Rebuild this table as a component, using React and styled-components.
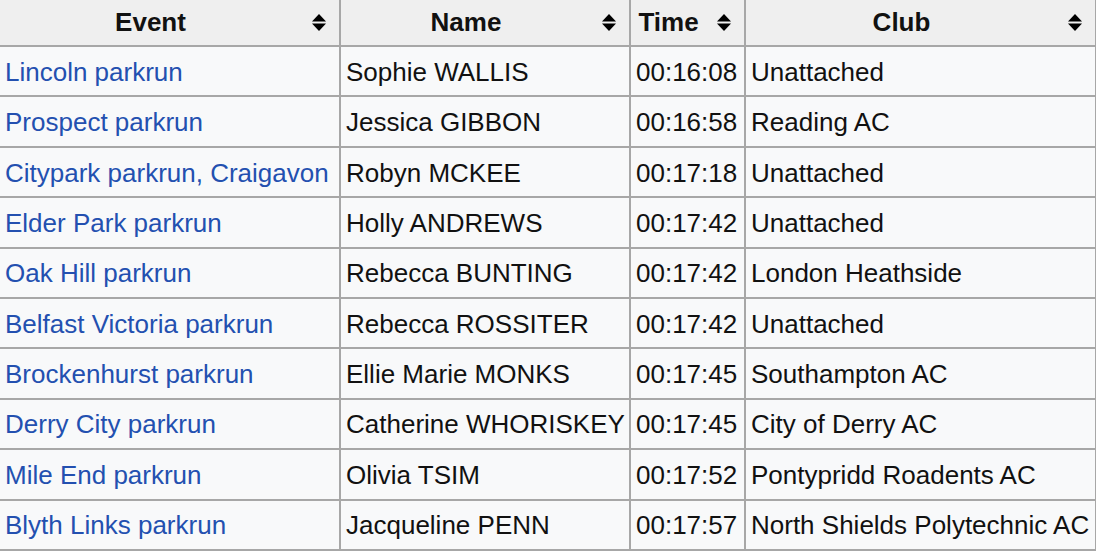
import React from 'react';
import styled, { createGlobalStyle } from 'styled-components';

const GlobalStyle = createGlobalStyle`
  html, body {
    margin: 0;
    padding: 0;
    background: #fff;
    overflow: hidden;
  }
  body {
    font-family: "Liberation Sans", Arial, sans-serif;
  }
`;

const Table = styled.table`
  border-collapse: separate;
  border-spacing: 0;
  table-layout: fixed;
  width: 1097px;
  background: #f8f9fa;
  color: #111;
  font-size: 26px;
  line-height: 1.15;
`;

const HeadCell = styled.th`
  position: relative;
  box-sizing: border-box;
  width: ${(p) => p.$width}px;
  height: 47px;
  padding: 1px 44px 0 6px;
  background: #efefef;
  border-right: 2px solid #a7a7a7;
  border-bottom: 2px solid #a7a7a7;
  font-weight: bold;
  text-align: center;
  vertical-align: middle;
  white-space: nowrap;
`;

const SortIcon = styled.svg`
  position: absolute;
  right: 13px;
  top: 50%;
  width: 14px;
  height: 17px;
  margin-top: -9px;
`;

const Cell = styled.td`
  box-sizing: border-box;
  height: 50.4px;
  padding: 3px 6px 0 5px;
  border-right: 2px solid #a7a7a7;
  border-bottom: 2px solid #a7a7a7;
  vertical-align: middle;
  white-space: nowrap;
  overflow: hidden;
`;

const EventLink = styled.a`
  color: #2350b0;
  text-decoration: none;
`;

const columns = [
  { label: 'Event', width: 341 },
  { label: 'Name', width: 290 },
  { label: 'Time', width: 115 },
  { label: 'Club', width: 351 },
];

const results = [
  ['Lincoln parkrun', 'Sophie WALLIS', '00:16:08', 'Unattached'],
  ['Prospect parkrun', 'Jessica GIBBON', '00:16:58', 'Reading AC'],
  ['Citypark parkrun, Craigavon', 'Robyn MCKEE', '00:17:18', 'Unattached'],
  ['Elder Park parkrun', 'Holly ANDREWS', '00:17:42', 'Unattached'],
  ['Oak Hill parkrun', 'Rebecca BUNTING', '00:17:42', 'London Heathside'],
  ['Belfast Victoria parkrun', 'Rebecca ROSSITER', '00:17:42', 'Unattached'],
  ['Brockenhurst parkrun', 'Ellie Marie MONKS', '00:17:45', 'Southampton AC'],
  ['Derry City parkrun', 'Catherine WHORISKEY', '00:17:45', 'City of Derry AC'],
  ['Mile End parkrun', 'Olivia TSIM', '00:17:52', 'Pontypridd Roadents AC'],
  ['Blyth Links parkrun', 'Jacqueline PENN', '00:17:57', 'North Shields Polytechnic AC'],
];

function Sort() {
  return (
    <SortIcon viewBox="0 0 14 17">
      <path d="M7 0 L14 7.6 L0 7.6 Z" fill="#000" />
      <path d="M0 9.4 L14 9.4 L7 17 Z" fill="#000" />
    </SortIcon>
  );
}

export default function App() {
  return (
    <>
      <GlobalStyle />
      <Table>
        <thead>
          <tr>
            {columns.map((c) => (
              <HeadCell key={c.label} $width={c.width}>
                {c.label}
                <Sort />
              </HeadCell>
            ))}
          </tr>
        </thead>
        <tbody>
          {results.map(([event, name, time, club]) => (
            <tr key={event}>
              <Cell><EventLink href="#">{event}</EventLink></Cell>
              <Cell>{name}</Cell>
              <Cell>{time}</Cell>
              <Cell>{club}</Cell>
            </tr>
          ))}
        </tbody>
      </Table>
    </>
  );
}
